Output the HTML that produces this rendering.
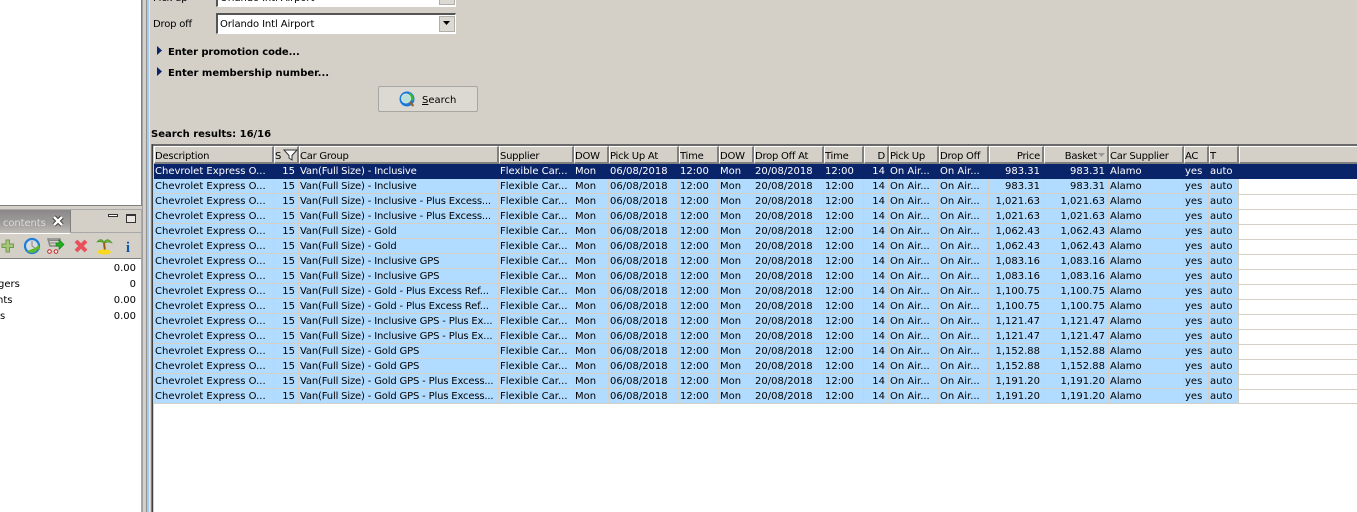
<!DOCTYPE html>
<html><head><meta charset="utf-8">
<style>
html,body{margin:0;padding:0}
body{width:1357px;height:512px;overflow:hidden;position:relative;background:#d4d0c8;font-family:"DejaVu Sans","Liberation Sans",sans-serif;font-size:10px;color:#000}
.a{position:absolute;white-space:nowrap}
table{position:absolute;left:154px;top:164px;border-collapse:separate;border-spacing:0;table-layout:fixed;width:1085px;background:#b2dcff}
td{height:13px;line-height:13px;padding:1px 2px 0 1px;border-right:1px solid #d4d0c8;border-bottom:1px solid #d4d0c8;overflow:hidden;white-space:nowrap;box-sizing:content-box}
td:nth-child(3){letter-spacing:-.17px;padding-left:1px}
td.r{text-align:right;padding-right:3px}
tr.s td{background:#0a246a;color:#fff;border-color:#0a246a}
.h{position:absolute;top:146px;height:18px;box-sizing:border-box;background:#d4d0c8;border-top:1px solid #fff;border-left:1px solid #fff;border-right:2px solid #808080;border-bottom:2px solid #808080;line-height:17px;padding-top:1px;padding-left:0;white-space:nowrap;overflow:hidden;letter-spacing:-.25px}
.h.r{text-align:right;padding-right:2px}
.b{font-weight:bold}
.combo{position:absolute;box-sizing:border-box;left:216px;width:240px;background:#fff;border:1px solid #fff;}
</style></head><body>

<!-- left panel -->
<div class="a" style="left:0;top:0;width:141px;height:205px;background:#fff"></div>
<div class="a" style="left:0;top:205px;width:142px;height:1px;background:#808080"></div>
<div class="a" style="left:141px;top:0;width:1px;height:206px;background:#808080"></div>
<div class="a" style="left:0;top:209px;width:142px;height:50px;background:#d4d0c8"></div>
<div class="a" style="left:0;top:209px;width:142px;height:1px;background:#a8a8a8"></div>
<div class="a" style="left:141px;top:209px;width:1px;height:303px;background:#a8a8a8"></div>
<div class="a" style="left:0;top:210px;width:70px;height:23px;background:linear-gradient(#8a8888,#a09e9c 60%,#c0bdb8)"></div>
<div class="a" style="left:70px;top:210px;width:1px;height:23px;background:#808080"></div>
<div class="a" style="left:0;top:233px;width:70px;height:1px;background:#fff"></div>
<div class="a" style="left:70px;top:232px;width:71px;height:1px;background:#a8a8a8"></div>
<div class="a" style="left:3px;top:217px;color:#dddbd6;font-size:10px;line-height:14px;letter-spacing:-.1px">contents</div>
<svg class="a" style="left:51px;top:214px" width="14" height="14" viewBox="0 0 14 14"><path d="M3 3L11 11M11 3L3 11" stroke="#333" stroke-width="4.4" fill="none"/><path d="M3 3L11 11M11 3L3 11" stroke="#fff" stroke-width="2.6" fill="none"/></svg>
<div class="a" style="left:108px;top:214px;width:10px;height:3px;box-sizing:border-box;border:1px solid #333;background:#fff"></div>
<div class="a" style="left:126px;top:214px;width:10px;height:9px;box-sizing:border-box;border:1px solid #333;border-top-width:2px;background:#e8e6e0"></div>

<svg class="a" style="left:0;top:236px" width="140" height="20" viewBox="0 0 140 20">
<path d="M5.500 4h3.500v4h4v3.500H9V16H5.500v-4.500h-4V8h4z" transform="translate(.5,0)" fill="#a8c878" stroke="#6f9a52"/>
<circle cx="32" cy="10" r="7" fill="#d8dcdc" stroke="#1c7ed8" stroke-width="2.200"/>
<path d="M32 5v5l3 2" stroke="#888" fill="none"/>
<path d="M27 15a7 7 0 0 0 11-2l2 1-1-5-4 3z" fill="#5cb82c"/>
<path d="M48 3h12l-1 7H50z" fill="none" stroke="#888" stroke-width="1.500"/>
<path d="M49 4.500h10M49 7h10" stroke="#888"/>
<path d="M56 7h3V3.500l5 5-5 5V10h-3z" fill="#20b020" stroke="#0a7a0a" stroke-width=".6"/>
<circle cx="49.500" cy="15.500" r="1.800" fill="#fff" stroke="#c02020"/>
<circle cx="56" cy="15.500" r="1.800" fill="#fff" stroke="#c02020"/>
<path d="M76 5L86 15M86 5L76 15" stroke="#e8505a" stroke-width="4"/>
<path d="M104 7l1 8" stroke="#9a5a10" stroke-width="2"/>
<path d="M97 6q4-5 7 0q4-5 8 1q-4-2-7 0q-4-2-8-1z" fill="#70b030" stroke="#3f8a20" stroke-width=".6"/>
<ellipse cx="104" cy="16" rx="7" ry="2.500" fill="#f8d820"/>
<text x="128" y="16" text-anchor="middle" font-family="Liberation Serif,serif" font-weight="bold" font-size="15" fill="#1058a8">i</text>
</svg>
<div class="a" style="left:0;top:258px;width:141px;height:1px;background:#808080"></div>
<div class="a" style="left:0;top:259px;width:141px;height:253px;background:#fff"></div>
<div class="a" style="left:0;top:262px;width:136px;text-align:right;line-height:14px">0.00</div>
<div class="a" style="left:-2px;top:278px;line-height:14px">gers</div>
<div class="a" style="left:0;top:278px;width:136px;text-align:right;line-height:14px">0</div>
<div class="a" style="left:-3px;top:294px;line-height:14px">nts</div>
<div class="a" style="left:0;top:294px;width:136px;text-align:right;line-height:14px">0.00</div>
<div class="a" style="left:0;top:310px;line-height:14px">s</div>
<div class="a" style="left:0;top:310px;width:136px;text-align:right;line-height:14px">0.00</div>
<div class="a" style="left:0;top:206px;width:142px;height:3px;background:#d4d0c8"></div>

<!-- splitter -->
<div class="a" style="left:142px;top:0;width:1px;height:512px;background:#a0a0a0"></div>
<div class="a" style="left:147px;top:0;width:2px;height:512px;background:#a6caf0"></div>
<div class="a" style="left:146px;top:0;width:1px;height:512px;background:#909090"></div>
<div class="a" style="left:149px;top:0;width:1px;height:512px;background:#e8e6e0"></div>

<!-- form -->
<div class="a" style="left:153px;top:-8px;line-height:14px;letter-spacing:-.2px">Pick up</div>
<div class="combo" style="top:-14px;height:21px;border-top:2px solid #555;border-left:2px solid #555">
 <div class="a" style="left:2px;top:4px;line-height:14px;letter-spacing:-.1px">Orlando Intl Airport</div>
 <div class="a" style="left:221px;top:1px;width:16px;height:16px;background:#dcd8d2;border:1px solid #b0aea8;box-sizing:border-box"></div>
</div>
<div class="a" style="left:153px;top:18px;line-height:14px;letter-spacing:-.2px">Drop off</div>
<div class="combo" style="top:13px;height:21px;border-top:2px solid #555;border-left:2px solid #555">
 <div class="a" style="left:2px;top:3px;line-height:14px;letter-spacing:-.1px">Orlando Intl Airport</div>
 <div class="a" style="left:221px;top:1px;width:16px;height:16px;background:#dcd8d2;border:1px solid #b0aea8;box-sizing:border-box"></div>
 <svg class="a" style="left:225px;top:6px" width="8" height="5"><path d="M0 0h7L3.500 4z" fill="#000"/></svg>
</div>
<svg class="a" style="left:157px;top:46px" width="6" height="10"><path d="M0 0l5 4.500L0 9z" fill="#0a246a"/></svg>
<div class="a b" style="left:168px;top:46px;line-height:14px;font-size:10px;letter-spacing:-.1px">Enter promotion code...</div>
<svg class="a" style="left:157px;top:67px" width="6" height="10"><path d="M0 0l5 4.500L0 9z" fill="#0a246a"/></svg>
<div class="a b" style="left:168px;top:67px;line-height:14px;font-size:10px">Enter membership number...</div>

<div class="a" style="left:378px;top:86px;width:100px;height:26px;box-sizing:border-box;background:#dcd8d2;border:1px solid #a8a6a0;border-radius:2px"></div>
<svg class="a" style="left:399px;top:91px" width="17" height="17" viewBox="0 0 17 17">
<circle cx="8" cy="8" r="7.500" fill="#1a78d8"/><path d="M10 1q5 3 5 8l-4 1z" fill="#3cb83c"/>
<circle cx="7" cy="7.500" r="4.500" fill="#b8e0d8" stroke="#d8e8e8"/>
<path d="M10.500 11l4 4" stroke="#a06020" stroke-width="2"/>
</svg>
<div class="a" style="left:422px;top:94px;line-height:14px"><span style="text-decoration:underline">S</span>earch</div>

<div class="a b" style="left:151px;top:128px;line-height:14px;font-size:10px">Search results: 16/16</div>

<!-- table frame -->
<div class="a" style="left:152px;top:144px;width:1205px;height:368px;background:#fff"></div>
<div class="a" style="left:152px;top:144px;width:1205px;height:2px;background:#6a6a6a"></div>
<div class="a" style="left:151px;top:144px;width:1px;height:368px;background:#808080"></div>
<div class="a" style="left:152px;top:144px;width:1px;height:368px;background:#404040"></div>
<div class="a" style="left:153px;top:146px;width:1px;height:366px;background:#d4d0c8"></div>

<!-- header -->
<div class="h" style="left:154px;width:120px">Description</div>
<div class="h" style="left:274px;width:25px">S</div>
<svg class="a" style="left:283px;top:149px" width="15" height="12"><path d="M1 1h13L9 6.500v4.500L6 9V6.500z" fill="#fff" stroke="#333"/></svg>
<div class="h" style="left:299px;width:200px">Car Group</div>
<div class="h" style="left:499px;width:75px">Supplier</div>
<div class="h" style="left:574px;width:35px">DOW</div>
<div class="h" style="left:609px;width:70px">Pick Up At</div>
<div class="h" style="left:679px;width:40px">Time</div>
<div class="h" style="left:719px;width:35px">DOW</div>
<div class="h" style="left:754px;width:70px">Drop Off At</div>
<div class="h" style="left:824px;width:40px">Time</div>
<div class="h r" style="left:864px;width:25px">D</div>
<div class="h" style="left:889px;width:50px">Pick Up</div>
<div class="h" style="left:939px;width:50px">Drop Off</div>
<div class="h r" style="left:989px;width:55px">Price</div>
<div class="h r" style="left:1044px;width:65px;padding-right:10px">Basket</div>
<svg class="a" style="left:1098px;top:153px" width="9" height="5"><path d="M0 0h7L3.500 4z" fill="#999"/></svg>
<div class="h" style="left:1109px;width:75px">Car Supplier</div>
<div class="h" style="left:1184px;width:25px">AC</div>
<div class="h" style="left:1209px;width:30px">T</div>
<div class="h" style="left:1239px;width:118px;border-right:0"></div>

<div class="a" style="left:1239px;top:164px;width:118px;height:15px;background:#0a246a"></div>
<div class="a" style="left:1239px;top:194px;width:118px;height:1px;background:#d4d0c8"></div>
<div class="a" style="left:1239px;top:179px;width:118px;height:1px;background:#fff"></div>
<div class="a" style="left:1239px;top:209px;width:118px;height:1px;background:#d4d0c8"></div>
<div class="a" style="left:1239px;top:224px;width:118px;height:1px;background:#d4d0c8"></div>
<div class="a" style="left:1239px;top:239px;width:118px;height:1px;background:#d4d0c8"></div>
<div class="a" style="left:1239px;top:254px;width:118px;height:1px;background:#d4d0c8"></div>
<div class="a" style="left:1239px;top:269px;width:118px;height:1px;background:#d4d0c8"></div>
<div class="a" style="left:1239px;top:284px;width:118px;height:1px;background:#d4d0c8"></div>
<div class="a" style="left:1239px;top:299px;width:118px;height:1px;background:#d4d0c8"></div>
<div class="a" style="left:1239px;top:314px;width:118px;height:1px;background:#d4d0c8"></div>
<div class="a" style="left:1239px;top:329px;width:118px;height:1px;background:#d4d0c8"></div>
<div class="a" style="left:1239px;top:344px;width:118px;height:1px;background:#d4d0c8"></div>
<div class="a" style="left:1239px;top:359px;width:118px;height:1px;background:#d4d0c8"></div>
<div class="a" style="left:1239px;top:374px;width:118px;height:1px;background:#d4d0c8"></div>
<div class="a" style="left:1239px;top:389px;width:118px;height:1px;background:#d4d0c8"></div>
<div class="a" style="left:1239px;top:403px;width:118px;height:1px;background:#d4d0c8"></div>

<table>
<colgroup><col style="width:120px"><col style="width:25px"><col style="width:200px"><col style="width:75px"><col style="width:35px"><col style="width:70px"><col style="width:40px"><col style="width:35px"><col style="width:70px"><col style="width:40px"><col style="width:25px"><col style="width:50px"><col style="width:50px"><col style="width:55px"><col style="width:65px"><col style="width:75px"><col style="width:25px"><col style="width:30px"></colgroup>
<tr class="s"><td>Chevrolet Express O...</td><td class="r">15</td><td>Van(Full Size) - Inclusive</td><td>Flexible Car...</td><td>Mon</td><td>06/08/2018</td><td>12:00</td><td>Mon</td><td>20/08/2018</td><td>12:00</td><td class="r">14</td><td>On Air...</td><td>On Air...</td><td class="r">983.31</td><td class="r">983.31</td><td>Alamo</td><td>yes</td><td>auto</td></tr>
<tr><td>Chevrolet Express O...</td><td class="r">15</td><td>Van(Full Size) - Inclusive</td><td>Flexible Car...</td><td>Mon</td><td>06/08/2018</td><td>12:00</td><td>Mon</td><td>20/08/2018</td><td>12:00</td><td class="r">14</td><td>On Air...</td><td>On Air...</td><td class="r">983.31</td><td class="r">983.31</td><td>Alamo</td><td>yes</td><td>auto</td></tr>
<tr><td>Chevrolet Express O...</td><td class="r">15</td><td>Van(Full Size) - Inclusive - Plus Excess...</td><td>Flexible Car...</td><td>Mon</td><td>06/08/2018</td><td>12:00</td><td>Mon</td><td>20/08/2018</td><td>12:00</td><td class="r">14</td><td>On Air...</td><td>On Air...</td><td class="r">1,021.63</td><td class="r">1,021.63</td><td>Alamo</td><td>yes</td><td>auto</td></tr>
<tr><td>Chevrolet Express O...</td><td class="r">15</td><td>Van(Full Size) - Inclusive - Plus Excess...</td><td>Flexible Car...</td><td>Mon</td><td>06/08/2018</td><td>12:00</td><td>Mon</td><td>20/08/2018</td><td>12:00</td><td class="r">14</td><td>On Air...</td><td>On Air...</td><td class="r">1,021.63</td><td class="r">1,021.63</td><td>Alamo</td><td>yes</td><td>auto</td></tr>
<tr><td>Chevrolet Express O...</td><td class="r">15</td><td>Van(Full Size) - Gold</td><td>Flexible Car...</td><td>Mon</td><td>06/08/2018</td><td>12:00</td><td>Mon</td><td>20/08/2018</td><td>12:00</td><td class="r">14</td><td>On Air...</td><td>On Air...</td><td class="r">1,062.43</td><td class="r">1,062.43</td><td>Alamo</td><td>yes</td><td>auto</td></tr>
<tr><td>Chevrolet Express O...</td><td class="r">15</td><td>Van(Full Size) - Gold</td><td>Flexible Car...</td><td>Mon</td><td>06/08/2018</td><td>12:00</td><td>Mon</td><td>20/08/2018</td><td>12:00</td><td class="r">14</td><td>On Air...</td><td>On Air...</td><td class="r">1,062.43</td><td class="r">1,062.43</td><td>Alamo</td><td>yes</td><td>auto</td></tr>
<tr><td>Chevrolet Express O...</td><td class="r">15</td><td>Van(Full Size) - Inclusive GPS</td><td>Flexible Car...</td><td>Mon</td><td>06/08/2018</td><td>12:00</td><td>Mon</td><td>20/08/2018</td><td>12:00</td><td class="r">14</td><td>On Air...</td><td>On Air...</td><td class="r">1,083.16</td><td class="r">1,083.16</td><td>Alamo</td><td>yes</td><td>auto</td></tr>
<tr><td>Chevrolet Express O...</td><td class="r">15</td><td>Van(Full Size) - Inclusive GPS</td><td>Flexible Car...</td><td>Mon</td><td>06/08/2018</td><td>12:00</td><td>Mon</td><td>20/08/2018</td><td>12:00</td><td class="r">14</td><td>On Air...</td><td>On Air...</td><td class="r">1,083.16</td><td class="r">1,083.16</td><td>Alamo</td><td>yes</td><td>auto</td></tr>
<tr><td>Chevrolet Express O...</td><td class="r">15</td><td>Van(Full Size) - Gold - Plus Excess Ref...</td><td>Flexible Car...</td><td>Mon</td><td>06/08/2018</td><td>12:00</td><td>Mon</td><td>20/08/2018</td><td>12:00</td><td class="r">14</td><td>On Air...</td><td>On Air...</td><td class="r">1,100.75</td><td class="r">1,100.75</td><td>Alamo</td><td>yes</td><td>auto</td></tr>
<tr><td>Chevrolet Express O...</td><td class="r">15</td><td>Van(Full Size) - Gold - Plus Excess Ref...</td><td>Flexible Car...</td><td>Mon</td><td>06/08/2018</td><td>12:00</td><td>Mon</td><td>20/08/2018</td><td>12:00</td><td class="r">14</td><td>On Air...</td><td>On Air...</td><td class="r">1,100.75</td><td class="r">1,100.75</td><td>Alamo</td><td>yes</td><td>auto</td></tr>
<tr><td>Chevrolet Express O...</td><td class="r">15</td><td>Van(Full Size) - Inclusive GPS - Plus Ex...</td><td>Flexible Car...</td><td>Mon</td><td>06/08/2018</td><td>12:00</td><td>Mon</td><td>20/08/2018</td><td>12:00</td><td class="r">14</td><td>On Air...</td><td>On Air...</td><td class="r">1,121.47</td><td class="r">1,121.47</td><td>Alamo</td><td>yes</td><td>auto</td></tr>
<tr><td>Chevrolet Express O...</td><td class="r">15</td><td>Van(Full Size) - Inclusive GPS - Plus Ex...</td><td>Flexible Car...</td><td>Mon</td><td>06/08/2018</td><td>12:00</td><td>Mon</td><td>20/08/2018</td><td>12:00</td><td class="r">14</td><td>On Air...</td><td>On Air...</td><td class="r">1,121.47</td><td class="r">1,121.47</td><td>Alamo</td><td>yes</td><td>auto</td></tr>
<tr><td>Chevrolet Express O...</td><td class="r">15</td><td>Van(Full Size) - Gold GPS</td><td>Flexible Car...</td><td>Mon</td><td>06/08/2018</td><td>12:00</td><td>Mon</td><td>20/08/2018</td><td>12:00</td><td class="r">14</td><td>On Air...</td><td>On Air...</td><td class="r">1,152.88</td><td class="r">1,152.88</td><td>Alamo</td><td>yes</td><td>auto</td></tr>
<tr><td>Chevrolet Express O...</td><td class="r">15</td><td>Van(Full Size) - Gold GPS</td><td>Flexible Car...</td><td>Mon</td><td>06/08/2018</td><td>12:00</td><td>Mon</td><td>20/08/2018</td><td>12:00</td><td class="r">14</td><td>On Air...</td><td>On Air...</td><td class="r">1,152.88</td><td class="r">1,152.88</td><td>Alamo</td><td>yes</td><td>auto</td></tr>
<tr><td>Chevrolet Express O...</td><td class="r">15</td><td>Van(Full Size) - Gold GPS - Plus Excess...</td><td>Flexible Car...</td><td>Mon</td><td>06/08/2018</td><td>12:00</td><td>Mon</td><td>20/08/2018</td><td>12:00</td><td class="r">14</td><td>On Air...</td><td>On Air...</td><td class="r">1,191.20</td><td class="r">1,191.20</td><td>Alamo</td><td>yes</td><td>auto</td></tr>
<tr><td>Chevrolet Express O...</td><td class="r">15</td><td>Van(Full Size) - Gold GPS - Plus Excess...</td><td>Flexible Car...</td><td>Mon</td><td>06/08/2018</td><td>12:00</td><td>Mon</td><td>20/08/2018</td><td>12:00</td><td class="r">14</td><td>On Air...</td><td>On Air...</td><td class="r">1,191.20</td><td class="r">1,191.20</td><td>Alamo</td><td>yes</td><td>auto</td></tr>
</table>
</body></html>
